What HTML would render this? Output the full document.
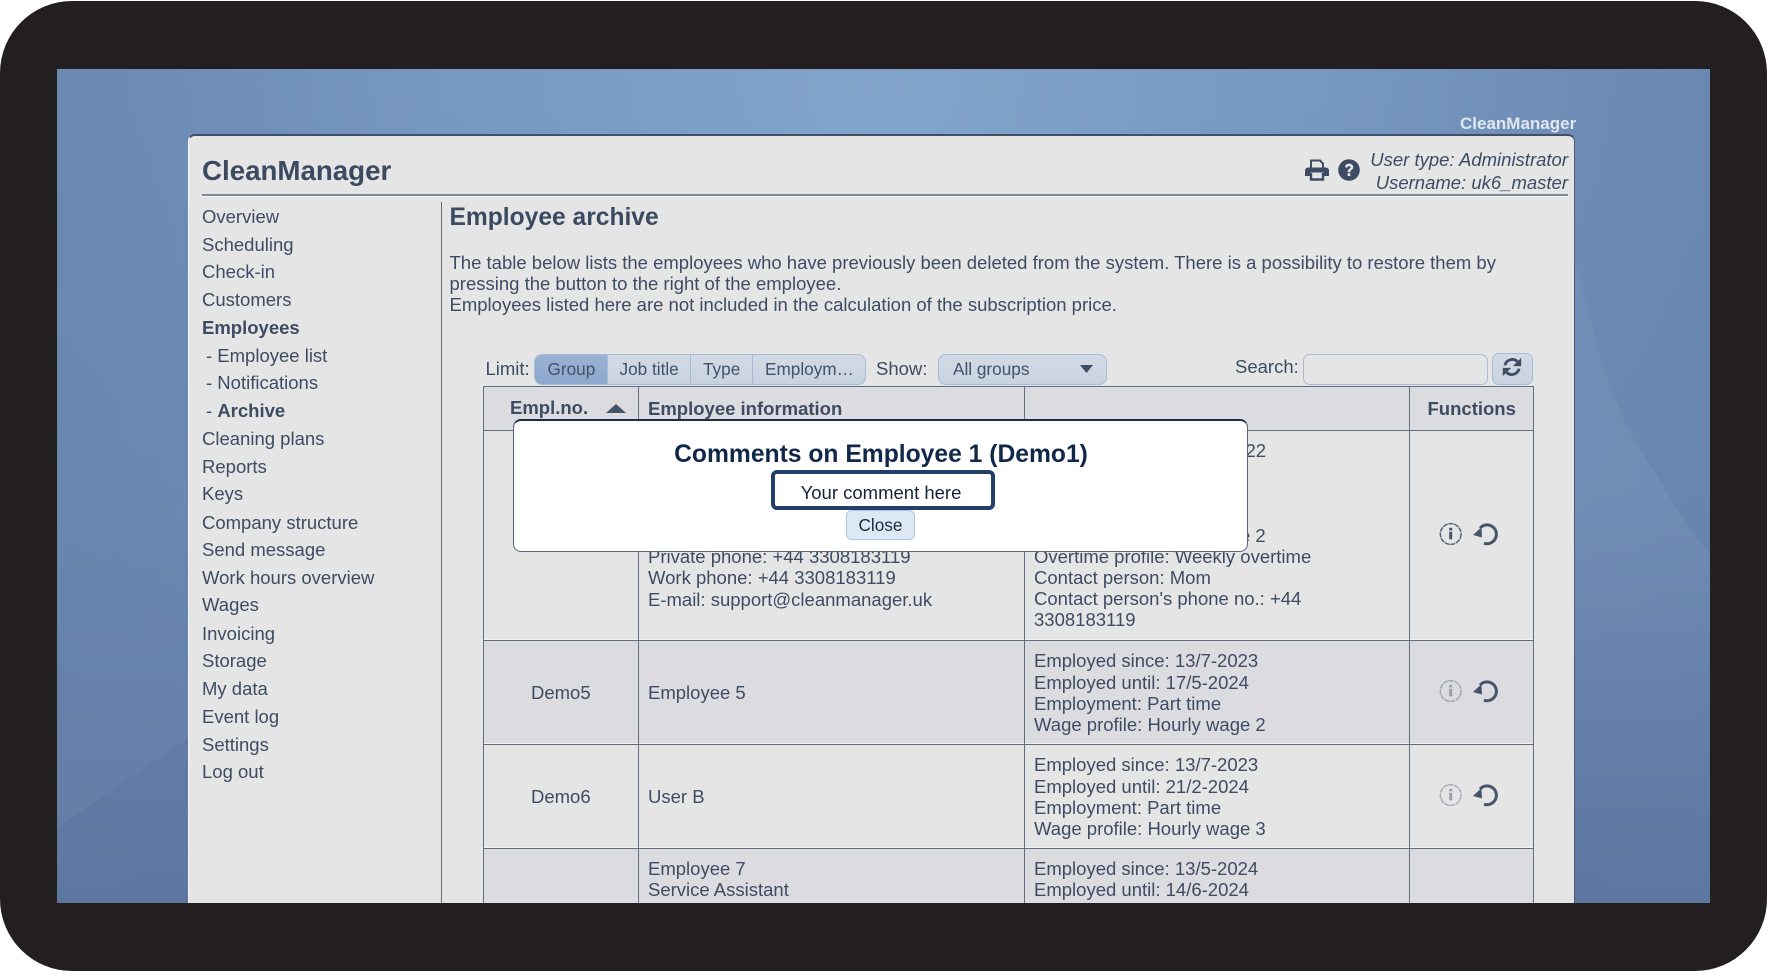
<!DOCTYPE html>
<html><head><meta charset="utf-8"><title>CleanManager</title>
<style>
html,body{margin:0;padding:0;width:1767px;height:971px;background:#fff;overflow:hidden}
*{box-sizing:border-box}
body{font-family:"Liberation Sans",Arial,sans-serif;color:#3e4c63;font-size:18.5px;position:relative}
.frame{position:absolute;left:0;top:1px;width:1767px;height:970px;background:#231f20;border-radius:72px}
.clip{position:absolute;left:57px;top:69px;width:1653px;height:834px;overflow:hidden;background:#6c8ab3}
.in{position:absolute;left:-57px;top:-69px;width:1767px;height:971px;filter:blur(.3px)}
.t{position:absolute;white-space:nowrap;line-height:22px;height:22px}
.b{font-weight:bold}
.r{position:absolute}
.hl{position:absolute;background:#5f6d82;height:1px}
.vl{position:absolute;background:#5f6d82;width:1px}
.s{font-size:17.2px;color:#42526a}
</style></head><body>
<div class="frame"></div>
<div class="clip"><div class="in">
<svg class="r" style="left:57px;top:69px" width="1653" height="834" viewBox="0 0 1653 834">
<defs>
<linearGradient id="v" x1="0" y1="0" x2="0" y2="1"><stop offset="0" stop-color="#7090b9"/><stop offset=".5" stop-color="#6c8bb4"/><stop offset="1" stop-color="#5b759e"/></linearGradient>
<radialGradient id="g" cx="825" cy="20" r="760" gradientUnits="userSpaceOnUse"><stop offset="0" stop-color="#82a5cc" stop-opacity="1"/><stop offset="1" stop-color="#7ea2cb" stop-opacity="0"/></radialGradient>
<linearGradient id="e" x1="0" y1="0" x2="1" y2="0"><stop offset="0" stop-color="#5f7ca6" stop-opacity=".3"/><stop offset=".2" stop-color="#5f7ca6" stop-opacity="0"/><stop offset=".8" stop-color="#5f7ca6" stop-opacity="0"/><stop offset="1" stop-color="#5f7ca6" stop-opacity=".35"/></linearGradient>
<linearGradient id="l1" x1="0" y1="400" x2="0" y2="760" gradientUnits="userSpaceOnUse"><stop offset="0" stop-color="#fff" stop-opacity="0"/><stop offset="1" stop-color="#fff" stop-opacity=".04"/></linearGradient>
<linearGradient id="l2" x1="0" y1="190" x2="0" y2="760" gradientUnits="userSpaceOnUse"><stop offset="0" stop-color="#fff" stop-opacity=".04"/><stop offset=".5" stop-color="#fff" stop-opacity=".05"/><stop offset="1" stop-color="#fff" stop-opacity="0"/></linearGradient>
</defs>
<rect width="1653" height="834" fill="url(#v)"/>
<rect width="1653" height="834" fill="url(#g)"/>
<rect width="1653" height="834" fill="url(#e)"/>
<path d="M0 759 L140 663 V400 H0Z" fill="url(#l1)"/>
<path d="M1518 193 C1535 260 1555 335 1580 375 C1605 415 1630 460 1653 485 V760 H1518Z" fill="url(#l2)"/>
</svg>

<div class="t b" style="left:1460px;top:113px;font-size:17px;color:#e1e7ef">CleanManager</div>

<div class="r" style="left:188px;top:134px;width:1387px;height:800px;background:#e5e5e5;border-radius:7px 7px 0 0;border-top:2px solid #3f5068;border-left:1px solid #f4f4f4;border-right:1px solid #4d5d76"></div>

<div class="t b" style="left:202px;top:156px;height:30px;line-height:30px;font-size:27.7px;color:#3c4a61">CleanManager</div>

<svg class="r" style="left:1305px;top:159px" width="24" height="22" viewBox="0 0 24 22"><path d="M6 9V1.5H15L18 4.5V9" fill="none" stroke="#3e4c63" stroke-width="2"/><path d="M3 8.5H21A3 3 0 0 1 24 11.5V17H18.5V13.5H5.5V17H0V11.5A3 3 0 0 1 3 8.5Z" fill="#3e4c63"/><path d="M6 14V20.5H18V14" fill="none" stroke="#3e4c63" stroke-width="2.4"/></svg>
<svg class="r" style="left:1338px;top:159px" width="22" height="22" viewBox="0 0 22 22"><circle cx="11" cy="11" r="10.8" fill="#3e4c63"/><path d="M7 8.3C7.3 5.8 9 4.6 11 4.6C13.5 4.6 15.3 6.1 15.3 8.3C15.3 10.8 12.3 10.9 12.3 13.2H9.6C9.6 10 12.6 9.8 12.6 8.4C12.6 7.5 11.9 7.1 11 7.1C10 7.1 9.5 7.7 9.3 8.8Z" fill="#e5e5e5"/><rect x="9.6" y="14.3" width="2.7" height="2.7" fill="#e5e5e5"/></svg>
<div class="t" style="right:199px;top:149px;font-style:italic">User type: Administrator</div>
<div class="t" style="right:199px;top:172px;font-style:italic">Username: uk6_master</div>
<div class="r" style="left:202px;top:194px;width:1366px;height:2px;background:#7d8796"></div>
<div class="r" style="left:202px;top:196px;width:1366px;height:1px;background:#f6f6f6"></div>
<div class="vl" style="left:441px;top:202px;height:720px"></div>

<div class="t" style="left:202px;top:205.5px">Overview</div>
<div class="t" style="left:202px;top:233.5px">Scheduling</div>
<div class="t" style="left:202px;top:261px">Check-in</div>
<div class="t" style="left:202px;top:289px">Customers</div>
<div class="t b" style="left:202px;top:316.5px">Employees</div>
<div class="t" style="left:206px;top:344.5px">- Employee list</div>
<div class="t" style="left:206px;top:372px">- Notifications</div>
<div class="t" style="left:206px;top:400px">- <b>Archive</b></div>
<div class="t" style="left:202px;top:428px">Cleaning plans</div>
<div class="t" style="left:202px;top:455.5px">Reports</div>
<div class="t" style="left:202px;top:483px">Keys</div>
<div class="t" style="left:202px;top:512px">Company structure</div>
<div class="t" style="left:202px;top:539px">Send message</div>
<div class="t" style="left:202px;top:567px">Work hours overview</div>
<div class="t" style="left:202px;top:594px">Wages</div>
<div class="t" style="left:202px;top:622.5px">Invoicing</div>
<div class="t" style="left:202px;top:650px">Storage</div>
<div class="t" style="left:202px;top:678px">My data</div>
<div class="t" style="left:202px;top:705.5px">Event log</div>
<div class="t" style="left:202px;top:733.5px">Settings</div>
<div class="t" style="left:202px;top:761px">Log out</div>

<div class="t b" style="left:449.5px;top:203.5px;height:28px;line-height:28px;font-size:24.6px;color:#3c4a61">Employee archive</div>
<div class="t" style="left:449.5px;top:251.5px">The table below lists the employees who have previously been deleted from the system. There is a possibility to restore them by</div>
<div class="t" style="left:449.5px;top:273px">pressing the button to the right of the employee.</div>
<div class="t" style="left:449.5px;top:293.5px">Employees listed here are not included in the calculation of the subscription price.</div>

<div class="t" style="left:485.5px;top:358px">Limit:</div>
<div class="r" style="left:534px;top:354px;width:332px;height:31px;border:1px solid #a6bcd9;border-radius:8px;background:linear-gradient(#d2dae5,#c8d2df);overflow:hidden">
<div class="r" style="left:-1px;top:-1px;width:73px;height:31px;background:linear-gradient(#9ab2d3,#8ca7cc)"></div>
<div class="vl" style="left:72px;top:0;height:31px;background:#a6bcd9"></div>
<div class="vl" style="left:155px;top:0;height:31px;background:#a6bcd9"></div>
<div class="vl" style="left:216.5px;top:0;height:31px;background:#a6bcd9"></div>
</div>
<div class="t s" style="left:547.5px;top:358px">Group</div>
<div class="t s" style="left:619.5px;top:358px">Job title</div>
<div class="t s" style="left:703px;top:358px">Type</div>
<div class="t s" style="left:765px;top:358px">Employm…</div>

<div class="t" style="left:876px;top:358px">Show:</div>
<div class="r" style="left:937.5px;top:354px;width:169px;height:31px;border:1px solid #a6bcd9;border-radius:8px;background:linear-gradient(#d2dae5,#c8d2df)"></div>
<div class="t s" style="left:953px;top:358px">All groups</div>
<svg class="r" style="left:1080px;top:365px" width="13" height="8"><path d="M0 0H13L6.5 8Z" fill="#3e4c63"/></svg>

<div class="t" style="left:1235px;top:356px">Search:</div>
<div class="r" style="left:1303px;top:354px;width:185px;height:31px;border:1px solid #a6bcd9;border-radius:7px;background:#e5e5e5"></div>
<div class="r" style="left:1492px;top:353px;width:41px;height:32px;border:1px solid #a6bcd9;border-radius:7px;background:linear-gradient(#d2dae5,#c8d2df)"></div>
<svg class="r" style="left:1501.5px;top:356.5px" width="20" height="20" viewBox="0 0 24 24"><path d="M3.5 10A9 9 0 0 1 18.5 5.5" fill="none" stroke="#3e4c63" stroke-width="3.4"/><path d="M23 1V11H13Z" fill="#3e4c63"/><path d="M20.5 14A9 9 0 0 1 5.5 18.5" fill="none" stroke="#3e4c63" stroke-width="3.4"/><path d="M1 23V13H11Z" fill="#3e4c63"/></svg>

<!-- table -->
<div class="r" style="left:483px;top:386px;width:1050px;height:44px;background:#dcdce0"></div>
<div class="r" style="left:483px;top:641px;width:1050px;height:103px;background:#dcdce0"></div>
<div class="r" style="left:483px;top:849px;width:1050px;height:60px;background:#dcdce0"></div>
<div class="r" style="left:484px;top:639px;width:1049px;height:1px;background:#f2f2f2"></div>
<div class="r" style="left:484px;top:743px;width:1049px;height:1px;background:#f2f2f2"></div>
<div class="r" style="left:484px;top:847px;width:1049px;height:1px;background:#f2f2f2"></div>
<div class="hl" style="left:483px;top:386px;width:1051px"></div>
<div class="hl" style="left:483px;top:430px;width:1051px"></div>
<div class="hl" style="left:483px;top:640px;width:1051px"></div>
<div class="hl" style="left:483px;top:744px;width:1051px"></div>
<div class="hl" style="left:483px;top:848px;width:1051px"></div>
<div class="vl" style="left:483px;top:386px;height:530px"></div>
<div class="vl" style="left:637.5px;top:386px;height:530px"></div>
<div class="vl" style="left:1024px;top:386px;height:530px"></div>
<div class="vl" style="left:1409px;top:386px;height:530px"></div>
<div class="vl" style="left:1533px;top:386px;height:530px"></div>

<div class="t b" style="left:510px;top:397px">Empl.no.</div>
<svg class="r" style="left:606px;top:404px" width="20" height="9"><path d="M10 0L20 9H0Z" fill="#44536a"/></svg>
<div class="t b" style="left:648px;top:398px">Employee information</div>
<div class="t b" style="left:1427.5px;top:398px">Functions</div>

<div class="t" style="left:1034px;top:440px">Employed since: 14/11/2022</div>
<div class="t" style="left:1034px;top:525px">Wage profile: Hourly wage 2</div>
<div class="t" style="left:1034px;top:546px">Overtime profile: Weekly overtime</div>
<div class="t" style="left:1034px;top:567px">Contact person: Mom</div>
<div class="t" style="left:1034px;top:588px">Contact person's phone no.: +44</div>
<div class="t" style="left:1034px;top:609px">3308183119</div>
<div class="t" style="left:648px;top:546px">Private phone: +44 3308183119</div>
<div class="t" style="left:648px;top:567px">Work phone: +44 3308183119</div>
<div class="t" style="left:648px;top:588.5px">E-mail: support@cleanmanager.uk</div>

<div class="t" style="left:531px;top:682px">Demo5</div>
<div class="t" style="left:648px;top:682px">Employee 5</div>
<div class="t" style="left:1034px;top:650px">Employed since: 13/7-2023</div>
<div class="t" style="left:1034px;top:671.5px">Employed until: 17/5-2024</div>
<div class="t" style="left:1034px;top:692.5px">Employment: Part time</div>
<div class="t" style="left:1034px;top:713.5px">Wage profile: Hourly wage 2</div>

<div class="t" style="left:531px;top:786px">Demo6</div>
<div class="t" style="left:648px;top:786px">User B</div>
<div class="t" style="left:1034px;top:754px">Employed since: 13/7-2023</div>
<div class="t" style="left:1034px;top:775.5px">Employed until: 21/2-2024</div>
<div class="t" style="left:1034px;top:796.5px">Employment: Part time</div>
<div class="t" style="left:1034px;top:817.5px">Wage profile: Hourly wage 3</div>

<div class="t" style="left:648px;top:858px">Employee 7</div>
<div class="t" style="left:648px;top:879px">Service Assistant</div>
<div class="t" style="left:1034px;top:858px">Employed since: 13/5-2024</div>
<div class="t" style="left:1034px;top:879px">Employed until: 14/6-2024</div>

<!-- icons -->
<svg class="r" style="left:1439px;top:522px" width="24" height="24" viewBox="0 0 24 24"><circle cx="11.7" cy="12" r="10.4" fill="none" stroke="#56657b" stroke-width="1.5" stroke-dasharray="5 .8"/><rect x="10.2" y="9.7" width="3" height="7.6" fill="#46556b"/><rect x="10.2" y="5.8" width="3" height="2.6" fill="#46556b"/></svg>
<svg class="r" style="left:1473px;top:521px" width="26" height="26" viewBox="0 0 26 26"><path d="M11 22.2A9.4 9.4 0 1 0 7 7" fill="none" stroke="#46556b" stroke-width="3"/><path d="M0 14L8.5 6L9 16.5Z" fill="#46556b"/></svg>

<svg class="r" style="left:1439px;top:678.5px;opacity:.45" width="24" height="24" viewBox="0 0 24 24"><circle cx="11.7" cy="12" r="10.4" fill="none" stroke="#56657b" stroke-width="1.5" stroke-dasharray="5 .8"/><rect x="10.2" y="9.7" width="3" height="7.6" fill="#46556b"/><rect x="10.2" y="5.8" width="3" height="2.6" fill="#46556b"/></svg>
<svg class="r" style="left:1473px;top:677.5px" width="26" height="26" viewBox="0 0 26 26"><path d="M11 22.2A9.4 9.4 0 1 0 7 7" fill="none" stroke="#46556b" stroke-width="3"/><path d="M0 14L8.5 6L9 16.5Z" fill="#46556b"/></svg>

<svg class="r" style="left:1439px;top:782.5px;opacity:.45" width="24" height="24" viewBox="0 0 24 24"><circle cx="11.7" cy="12" r="10.4" fill="none" stroke="#56657b" stroke-width="1.5" stroke-dasharray="5 .8"/><rect x="10.2" y="9.7" width="3" height="7.6" fill="#46556b"/><rect x="10.2" y="5.8" width="3" height="2.6" fill="#46556b"/></svg>
<svg class="r" style="left:1473px;top:781.5px" width="26" height="26" viewBox="0 0 26 26"><path d="M11 22.2A9.4 9.4 0 1 0 7 7" fill="none" stroke="#46556b" stroke-width="3"/><path d="M0 14L8.5 6L9 16.5Z" fill="#46556b"/></svg>

<!-- modal -->
<div class="r" style="left:513px;top:419px;width:735px;height:133px;background:#fff;border-radius:8px;border:1px solid #56657b;border-top:2px solid #1a2c4a"></div>
<div class="t b" style="left:513.5px;top:439.5px;width:735px;height:30px;line-height:30px;text-align:center;font-size:24.66px;color:#12284a">Comments on Employee 1 (Demo1)</div>
<div class="r" style="left:771px;top:470px;width:224px;height:40px;border:4px solid #24406a;border-radius:6px;background:#fff"></div>
<div class="t" style="left:769px;top:482px;width:224px;text-align:center;color:#15233a">Your comment here</div>
<div class="r" style="left:846px;top:510px;width:69px;height:30px;border:1px solid #a9c4e6;border-radius:6px;background:#dde8f5"></div>
<div class="t" style="left:846px;top:514px;width:69px;text-align:center;font-size:17.2px;color:#1b2a3f">Close</div>
</div></div>
</body></html>
